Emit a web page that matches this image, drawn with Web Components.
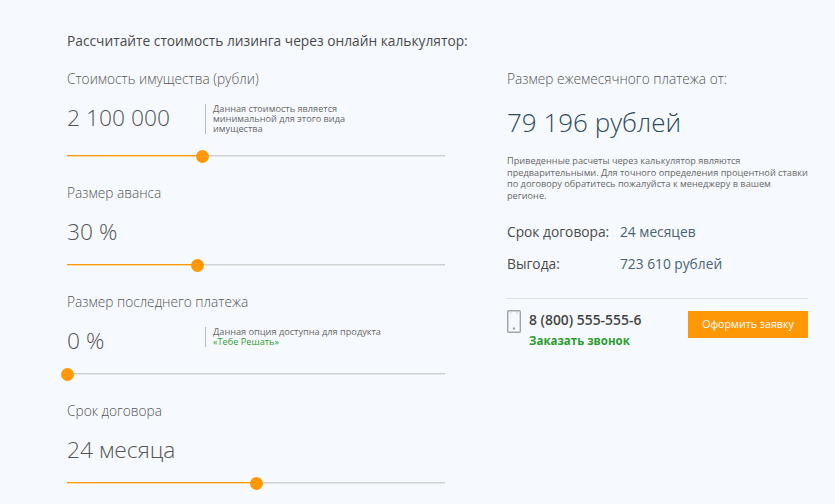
<!DOCTYPE html>
<html lang="ru">
<head>
<meta charset="utf-8">
<title>Калькулятор лизинга</title>
<style>
  html, body { margin: 0; height: 504px; overflow: hidden; background: #f6fafe; }
  body { font-family: "Open Sans", sans-serif; color: #4a4a4a; }
</style>
</head>
<body>
<lease-calculator>
  <range-field label="Стоимость имущества (рубли)" value="2 100 000" fill="135">
    Данная стоимость является минимальной для этого вида имущества
  </range-field>
  <range-field label="Размер аванса" value="30 %" fill="130"></range-field>
  <range-field label="Размер последнего платежа" value="0 %" fill="0">
    Данная опция доступна для продукта<br><a>«Тебе Решать»</a>
  </range-field>
  <range-field label="Срок договора" value="24 месяца" fill="189"></range-field>

  <payment-summary slot="side"></payment-summary>
</lease-calculator>

<script>
class LeaseCalculator extends HTMLElement {
  constructor() {
    super();
    this.attachShadow({ mode: "open" });
  }

  connectedCallback() {
    this.shadowRoot.innerHTML = /* html */`
    <style>
      :host {
        display: block;
        padding: 31px 27px 0 67px;
      }
      h1 {
        margin: 0 0 19px;
        font-size: 13.76px;
        line-height: 19px;
        font-weight: 400;
        color: #4a4a4a;
      }
      .cols {
        display: flex;
        justify-content: space-between;
      }
      .left {
        width: 378px;
        display: flex;
        flex-direction: column;
        gap: 26px;
      }
      .right {
        width: 301px;
      }
    </style>
    <h1>Рассчитайте стоимость лизинга через онлайн калькулятор:</h1>
    <div class="cols">
      <div class="left"><slot></slot></div>
      <div class="right"><slot name="side"></slot></div>
    </div>`;
  }
}

class RangeField extends HTMLElement {
  constructor() {
    super();
    this.attachShadow({ mode: "open" });
  }

  connectedCallback() {
    const fill = this.getAttribute("fill");
    this.shadowRoot.innerHTML = /* html */`
    <style>
      :host {
        display: block;
      }
      .label {
        font-size: 13.7px;
        line-height: 19px;
        font-weight: 300;
        color: #555;
      }
      .row {
        display: flex;
        align-items: flex-start;
        min-height: 27px;
        margin-top: 14px;
      }
      .value {
        width: 138px;
        height: 26px;
        flex: none;
        font-size: 22.8px;
        line-height: 32px;
        font-weight: 300;
        color: #555;
        white-space: nowrap;
      }
      .note {
        display: none;
        width: 170px;
        margin-top: 2px;
        padding-left: 7px;
        border-left: 1px solid #b9b9b9;
        font-size: 9.2px;
        line-height: 10px;
        color: #666;
      }
      .note.on {
        display: block;
      }
      ::slotted(a) {
        color: #2d9a2d;
      }
      .track {
        position: relative;
        height: 1px;
        margin: 21px 0 1px;
        background: #cfd0d1;
        box-shadow: 0 1px 0 #e4e6e8;
        --fill: ${fill}px;
      }
      .track::before {
        content: "";
        position: absolute;
        left: 0;
        top: 0;
        bottom: 0;
        width: var(--fill);
        background: #ff9807;
        box-shadow: 0 1px 0 #ffd9a3;
      }
      .knob {
        position: absolute;
        left: var(--fill);
        top: -5.5px;
        width: 13px;
        height: 13px;
        margin-left: -6px;
        border-radius: 50%;
        background: #ff9807;
      }
    </style>
    <div class="label">${this.getAttribute("label")}</div>
    <div class="row">
      <div class="value">${this.getAttribute("value")}</div>
      <div class="note ${this.textContent.trim() ? "on" : ""}"><slot></slot></div>
    </div>
    <div class="track"><span class="knob"></span></div>`;
  }
}

class PaymentSummary extends HTMLElement {
  constructor() {
    super();
    this.attachShadow({ mode: "open" });
  }

  connectedCallback() {
    this.shadowRoot.innerHTML = /* html */`
    <style>
      :host {
        display: block;
      }
      .title {
        font-size: 13.7px;
        line-height: 19px;
        font-weight: 300;
        color: #555;
      }
      .sum {
        margin-top: 16px;
        font-size: 26px;
        line-height: 37px;
        font-weight: 300;
        color: #2f4a5c;
      }
      .hint {
        margin-top: 14px;
        width: 301px;
        font-size: 9.2px;
        line-height: 11.7px;
        color: #666;
      }
      .facts {
        display: grid;
        grid-template-columns: 113px 1fr;
        row-gap: 13px;
        margin-top: 20px;
        font-size: 13.75px;
        line-height: 19px;
        color: #4a4a4a;
      }
      .facts b {
        font-weight: 400;
        color: #4b6272;
      }
      .foot {
        display: flex;
        align-items: flex-start;
        justify-content: space-between;
        margin-top: 25px;
        padding-top: 12px;
        border-top: 1px solid #dde1e4;
      }
      .phone {
        display: flex;
        gap: 8px;
      }
      svg {
        display: block;
        flex: none;
        margin-top: -1px;
      }
      .num {
        margin-top: -1px;
        font-size: 13.9px;
        line-height: 19px;
        font-weight: 600;
        color: #444;
      }
      .call {
        margin-top: 4px;
        font-size: 11.5px;
        line-height: 15px;
        font-weight: 700;
        color: #2d9a2d;
      }
      .btn {
        width: 120px;
        height: 27px;
        line-height: 27px;
        text-align: center;
        background: #ff9807;
        color: #fff;
        font-size: 10.7px;
      }
    </style>
    <div class="title">Размер ежемесячного платежа от:</div>
    <div class="sum">79 196 рублей</div>
    <div class="hint">Приведенные расчеты через калькулятор являются предварительными. Для точного определения процентной ставки по договору обратитесь пожалуйста к менеджеру в вашем регионе.</div>
    <div class="facts">
      <span>Срок договора:</span><b>24 месяцев</b>
      <span>Выгода:</span><b>723 610 рублей</b>
    </div>
    <div class="foot">
      <div class="phone">
        <svg width="14" height="23" viewBox="0 0 14 23">
          <rect x="0.7" y="0.7" width="12.6" height="21.6" rx="1" fill="none" stroke="#a3a3a3" stroke-width="1.4"/>
          <path d="M3 3h1.5M9.5 3H11" stroke="#b5b5b5"/>
          <circle cx="7" cy="18.5" r="1.2" fill="#a3a3a3"/>
        </svg>
        <div>
          <div class="num">8 (800) 555-555-6</div>
          <div class="call">Заказать звонок</div>
        </div>
      </div>
      <div class="btn">Оформить заявку</div>
    </div>`;
  }
}

customElements.define("lease-calculator", LeaseCalculator);
customElements.define("range-field", RangeField);
customElements.define("payment-summary", PaymentSummary);
</script>
</body>
</html>
